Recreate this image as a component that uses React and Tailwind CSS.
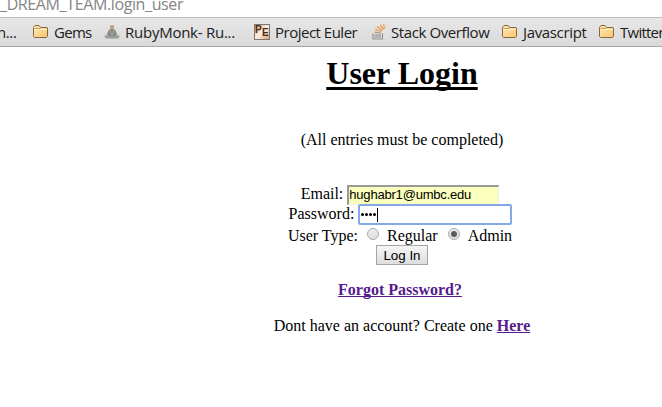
function Folder() {
  return (
    <svg width="16" height="14" viewBox="0 0 16 14" className="block">
      <defs>
        <linearGradient id="folder" x1="0" y1="0" x2="1" y2="1">
          <stop offset="0" stopColor="#ffe8b5" />
          <stop offset="1" stopColor="#fac56c" />
        </linearGradient>
      </defs>
      <path d="M.5 11.500V2.500L2 .5h4l1.500 2h6.500l.5.5v8.500l-1 1H1.500z" fill="url(#folder)" stroke="#87663d" />
      <path d="M1.500 3.500H7l1-1" fill="none" stroke="#c69a5d" />
      <path d="M1.500 4.500h12.500" stroke="#fff0c9" />
    </svg>
  );
}

function Monk() {
  return (
    <svg width="16" height="16" viewBox="0 0 16 16" className="block">
      <path d="M5 5.500l2-1h2l2 1 1.500 3 .5 2 2 1 .5 1.500-2 1.500H2.500L.5 13 1 11.500l2-1 .5-2z" fill="#989d97" />
      <path d="M5.500 7l-1 3 2 1m4-4l1 3-2 1M2 13l4-1.500h4l4 1.500M7 5.500l1 3 1-3" fill="none" stroke="#6d736f" strokeWidth=".8" />
      <path d="M2 12h3m6 0h3M6 7.500h1m2 0h1" stroke="#bbbeb7" />
      <circle cx="8" cy="3" r="2.100" fill="#c39a77" />
      <path d="M6.500 10.500h3v1h-3z" fill="#b99a80" />
    </svg>
  );
}

function Euler() {
  return (
    <div className="flex h-4 w-4 border border-[#777] bg-linear-to-br from-[#e08f4f] via-[#fff2e5] to-[#dca06c] font-['Liberation_Sans'] text-[10px] leading-[10px] font-bold text-[#4b2c20]">
      <span className="w-[7px]">P</span>
      <span className="mt-[3px] w-[7px]">E</span>
    </div>
  );
}

function Stack() {
  return (
    <svg width="14" height="16" viewBox="0 0 14 16" className="block" fill="none">
      <path d="M1 9.500v5.500h9.500V9.500" stroke="#929292" strokeWidth="1.200" />
      <path d="M2.500 13H9M2.500 11H9" stroke="#858585" />
      <path d="M2.600 8.200l6.400 1" stroke="#b59a71" strokeWidth="1.200" />
      <path d="M3.200 5.200l6.100 2.600M5.200 2.500l5.100 4M8.300.8l3 4.700M11.800.3l.5 4.500" stroke="#ef923c" strokeWidth="1.200" />
    </svg>
  );
}

function Bookmark({ icon, children, width, gap, tracking }) {
  return (
    <div className={`flex shrink-0 items-center ${width} ${gap}`}>
      <span className="shrink-0">{icon}</span>
      <span className={`whitespace-nowrap ${tracking}`}>{children}</span>
    </div>
  );
}

export default function App() {
  return (
    <div className="flex h-[407px] w-[662px] flex-col overflow-hidden bg-white text-black">
      <div className="flex h-[17px] shrink-0 font-['Open_Sans',sans-serif] text-[16px] text-[#858585]">
        <div className="-mt-[7px] h-[22px] leading-[22px] tracking-[-0.38px] whitespace-nowrap">_DREAM_TEAM.login_user</div>
      </div>
      <div className="flex h-[30px] shrink-0 items-center border-t border-b border-t-[#bdbdbd] border-b-[#a6a6a6] bg-linear-to-b from-[#e7e7e7] to-[#dadada] font-['Open_Sans',sans-serif] text-[15px] text-[#202020]">
        <span className="w-[33px] shrink-0 tracking-[-0.4px]"><span className="-ml-[3px]">n...</span></span>
        <Bookmark icon={<Folder />} width="w-[71px]" gap="gap-[5px]" tracking="tracking-[-0.7px]">Gems</Bookmark>
        <Bookmark icon={<Monk />} width="w-[150px]" gap="gap-[5px]" tracking="tracking-[-0.25px]">RubyMonk- Ru...</Bookmark>
        <Bookmark icon={<Euler />} width="w-[118px]" gap="gap-[5px]" tracking="tracking-[-0.5px]">Project Euler</Bookmark>
        <Bookmark icon={<Stack />} width="w-[130px]" gap="gap-[5px]" tracking="tracking-[-0.4px]">Stack Overflow</Bookmark>
        <Bookmark icon={<Folder />} width="w-[97px]" gap="gap-[5px]" tracking="tracking-[-0.35px]">Javascript</Bookmark>
        <Bookmark icon={<Folder />} width="w-[63px]" gap="gap-[5px]" tracking="tracking-[-0.75px]">Twitter</Bookmark>
      </div>
      <main className="ml-[142px] flex w-[520px] flex-col items-center font-['Liberation_Serif',serif] text-base leading-[18px]">
        <h1 className="mt-[8px] text-[32px] leading-[36px] font-bold underline decoration-[3px] underline-offset-[3px] [text-decoration-skip-ink:none]">User Login</h1>
        <p className="mt-[40px]">(All entries must be completed)</p>
        <form className="mt-[36px] flex flex-col items-center" onSubmit={(e) => e.preventDefault()}>
          <label className="mr-[4px] flex h-[19px] items-start gap-1">
            <span>Email:</span>
            <span className="h-[20px] w-[152px] border-t-2 border-r border-b border-l-2 border-t-[#999] border-r-[#eee] border-b-[#eee] border-l-[#999] bg-[#faffbd] font-['Liberation_Sans',sans-serif] text-[13px] leading-[16px] tracking-[-0.2px]">hughabr1@umbc.edu</span>
          </label>
          <label className="mr-[3px] flex h-[22px] items-start gap-[4px]">
            <span className="pt-px">Password:</span>
            <span className="flex h-[21px] w-[154px] items-center rounded-[2px] border-2 border-[#84a9e8] bg-white pl-px">
              <span className="flex gap-px">
                {[0, 1, 2, 3].map((n) => <i key={n} className="h-[3px] w-[3px] rounded-full bg-black" />)}
              </span>
              <i className="ml-px h-[14px] w-px bg-black" />
            </span>
          </label>
          <div className="mr-[4px] flex h-[19px] items-center">
            <span>User Type:</span>
            <i className="mr-[8px] mb-[3px] ml-[9px] h-[12px] w-[12px] rounded-full border border-[#aaa] bg-linear-to-b from-[#eee] to-[#ddd]" />
            <span>Regular</span>
            <i className="mr-[8px] mb-[3px] ml-[10px] flex h-[12px] w-[12px] items-center justify-center rounded-full border border-[#aaa] bg-linear-to-b from-[#eee] to-[#ddd]"><i className="h-[6px] w-[6px] rounded-full bg-[#5c5c5c]" /></i>
            <span>Admin</span>
          </div>
          <button className="h-[20px] w-[52px] border border-[#a4a4a4] bg-linear-to-b from-[#f6f6f6] to-[#dedede] font-['Liberation_Sans',sans-serif] text-[13.33px] leading-[17px] whitespace-nowrap">Log In</button>
        </form>
        <a className="mt-[16px] mr-[4px] font-bold text-[#551a8b] underline [text-decoration-skip-ink:none]">Forgot Password?</a>
        <p className="mt-[18px]">Dont have an account? Create one <a className="font-bold text-[#551a8b] underline [text-decoration-skip-ink:none]">Here</a></p>
      </main>
    </div>
  );
}
